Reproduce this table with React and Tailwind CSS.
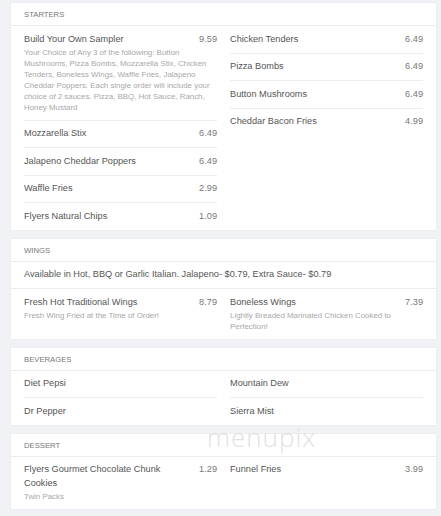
const STARTERS_LEFT = [
  {
    name: "Build Your Own Sampler",
    price: "9.59",
    desc: "Your Choice of Any 3 of the following: Button Mushrooms, Pizza Bombs, Mozzarella Stix, Chicken Tenders, Boneless Wings, Waffle Fries, Jalapeno Cheddar Poppers. Each single order will include your choice of 2 sauces. Pizza, BBQ, Hot Sauce, Ranch, Honey Mustard",
  },
  { name: "Mozzarella Stix", price: "6.49" },
  { name: "Jalapeno Cheddar Poppers", price: "6.49" },
  { name: "Waffle Fries", price: "2.99" },
  { name: "Flyers Natural Chips", price: "1.09" },
]

const STARTERS_RIGHT = [
  { name: "Chicken Tenders", price: "6.49" },
  { name: "Pizza Bombs", price: "6.49" },
  { name: "Button Mushrooms", price: "6.49" },
  { name: "Cheddar Bacon Fries", price: "4.99" },
]

const WINGS_LEFT = [
  { name: "Fresh Hot Traditional Wings", price: "8.79", desc: "Fresh Wing Fried at the Time of Order!" },
]
const WINGS_RIGHT = [
  { name: "Boneless Wings", price: "7.39", desc: "Lightly Breaded Marinated Chicken Cooked to Perfection!" },
]

const BEV_LEFT = [{ name: "Diet Pepsi" }, { name: "Dr Pepper" }]
const BEV_RIGHT = [{ name: "Mountain Dew" }, { name: "Sierra Mist" }]

const DESSERT_LEFT = [{ name: "Flyers Gourmet Chocolate Chunk Cookies", price: "1.29", desc: "Twin Packs" }]
const DESSERT_RIGHT = [{ name: "Funnel Fries", price: "3.99" }]

function Item({ item, last }) {
  return (
    <div className={`py-[6.5px] ${last ? "" : "border-b border-[#ececec]"}`}>
      <div className="flex items-start justify-between gap-[10px] text-[9.2px] leading-[13.5px] text-[#555]">
        <span>{item.name}</span>
        {item.price && <span className="shrink-0 text-[#777]">{item.price}</span>}
      </div>
      {item.desc && (
        <p className="mt-[1px] text-[7.9px] leading-[11px] text-[#a8a8a8]">{item.desc}</p>
      )}
    </div>
  )
}

function Column({ items }) {
  return (
    <div className="flex flex-col">
      {items.map((item, i) => (
        <Item key={item.name} item={item} last={i === items.length - 1} />
      ))}
    </div>
  )
}

function Section({ title, left, right, note }) {
  return (
    <section className="bg-white shadow-[0_0_1px_rgba(0,0,0,0.1)]">
      <h2 className="border-b border-[#ececec] px-[13px] pb-[6px] pt-[8px] text-[7.7px] leading-[8px] uppercase text-[#777]">
        {title}
      </h2>
      {note && (
        <p className="border-b border-[#ececec] px-[13px] py-[6.5px] text-[9.2px] leading-[13.5px] text-[#555]">
          {note}
        </p>
      )}
      <div className="grid grid-cols-2 gap-x-[13px] px-[13px]">
        <Column items={left} />
        <Column items={right} />
      </div>
    </section>
  )
}

export default function App() {
  return (
    <div
      className="relative min-h-[516px] bg-[#f1f2f5] pb-[8px] pl-[11px] pr-[5px] pt-[3px]"
      style={{ fontFamily: '"Liberation Sans", Arial, sans-serif' }}
    >
      <div className="flex flex-col gap-[9px]">
        <Section title="Starters" left={STARTERS_LEFT} right={STARTERS_RIGHT} />
        <Section
          title="Wings"
          note="Available in Hot, BBQ or Garlic Italian. Jalapeno- $0.79, Extra Sauce- $0.79"
          left={WINGS_LEFT}
          right={WINGS_RIGHT}
        />
        <Section title="Beverages" left={BEV_LEFT} right={BEV_RIGHT} />
        <Section title="Dessert" left={DESSERT_LEFT} right={DESSERT_RIGHT} />
      </div>
      <span
        className="pointer-events-none absolute left-[207px] top-[424px] text-[26px] font-light leading-none tracking-[1px] text-[#d4d4d4]/70"
        style={{ fontFamily: '"Open Sans", sans-serif' }}
      >
        menupix
      </span>
    </div>
  )
}
